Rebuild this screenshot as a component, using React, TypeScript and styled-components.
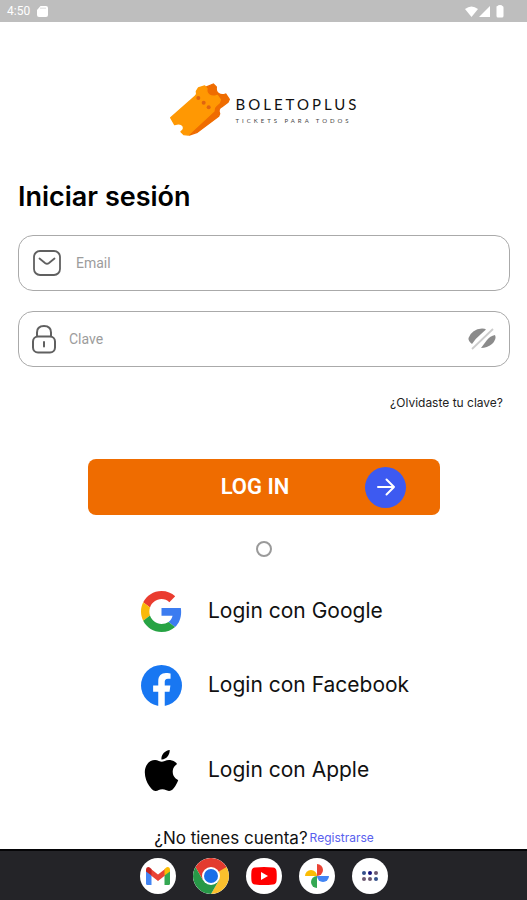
import React from "react";
import styled, { createGlobalStyle } from "styled-components";

const GlobalStyle = createGlobalStyle`
  * { box-sizing: border-box; }
  body { margin: 0; background: #fff; color: #111; font-family: Inter, "Open Sans", sans-serif; }
  button, input { font: inherit; }
  svg { display: block; flex: none; }
`;

const Screen = styled.div`
  min-height: 100vh;
  display: flex;
  flex-direction: column;
`;

const StatusBar = styled.header`
  display: flex;
  align-items: center;
  justify-content: space-between;
  height: 22px;
  padding: 0 23px 0 7px;
  background: #bebebe;
  color: #fff;
  font: 12px/22px Roboto, sans-serif;
`;

const StatusGroup = styled.div<{ $gap: number }>`
  display: flex;
  align-items: center;
  gap: ${(p) => p.$gap}px;
`;

const Content = styled.main`
  flex: 1;
  display: flex;
  flex-direction: column;
  padding: 61px 17px 0 18px;
`;

const Brand = styled.div`
  display: flex;
  align-items: center;
  align-self: center;
  gap: 5px;
`;

const BrandName = styled.div`
  font: 15px/20px Lato, sans-serif;
  letter-spacing: 3px;
`;

const BrandTagline = styled.div`
  color: #444;
  font: 6px/14px Lato, sans-serif;
  letter-spacing: 3px;
`;

const Title = styled.h1`
  margin: 41px 0 20px;
  font-size: 27px;
  line-height: 36px;
  font-weight: 600;
  color: #000;
`;

const Form = styled.form`
  display: flex;
  flex-direction: column;
`;

const Field = styled.label<{ $gap: number }>`
  display: flex;
  align-items: center;
  gap: ${(p) => p.$gap}px;
  height: 56px;
  padding: 0 12px;
  margin-bottom: 20px;
  border: 1px solid #aaa;
  border-radius: 15px;
`;

const TextInput = styled.input`
  flex: 1;
  min-width: 0;
  padding: 0;
  border: 0;
  outline: 0;
  background: none;
  font: 14px/20px Roboto, sans-serif;
  &::placeholder { color: #9c9c9c; opacity: 1; }
`;

const IconButton = styled.button`
  padding: 0;
  border: 0;
  background: none;
  cursor: pointer;
`;

const ForgotLink = styled.a`
  align-self: flex-end;
  margin: 8px 7px 0 0;
  color: #222;
  font-size: 12px;
  line-height: 16px;
  text-decoration: none;
`;

const SubmitButton = styled.button`
  display: grid;
  grid-template-columns: 1fr auto 1fr;
  align-items: center;
  width: 352px;
  max-width: 100%;
  height: 56px;
  margin: 48px auto 0;
  padding: 0 34px 0 16px;
  border: 0;
  border-radius: 8px;
  background: #ef6c00;
  color: #fff;
  font: 500 22px/28px Roboto, sans-serif;
  cursor: pointer;
`;

const SubmitLabel = styled.span`
  grid-column: 2;
  font-weight: 600;
`;

const ArrowBadge = styled.span`
  display: grid;
  place-items: center;
  justify-self: end;
  width: 41px;
  height: 41px;
  border-radius: 50%;
  background: #3d5af1;
`;

const RoundOption = styled.input`
  appearance: none;
  align-self: center;
  width: 16px;
  height: 16px;
  margin: 26px 0 0;
  border: 2px solid #9a9a9a;
  border-radius: 50%;
  &:checked { background: #9a9a9a; }
`;

const Providers = styled.div`
  display: flex;
  flex-direction: column;
  align-self: center;
  width: 246px;
  margin-top: 33px;
`;

const ProviderButton = styled.button<{ $space?: number }>`
  display: flex;
  align-items: center;
  gap: 26px;
  height: 42px;
  margin-top: ${(p) => p.$space ?? 0}px;
  padding: 0;
  border: 0;
  background: none;
  color: #111;
  font-size: 21px;
  line-height: 28px;
  white-space: nowrap;
  cursor: pointer;
`;

const SignUp = styled.p`
  display: flex;
  align-items: center;
  align-self: center;
  gap: 2px;
  margin: 36px 0 0;
  font-size: 17px;
  line-height: 22px;
  white-space: nowrap;
`;

const SignUpLink = styled.a`
  color: #5960ee;
  font-size: 12px;
  text-decoration: none;
`;

const Dock = styled.nav`
  display: flex;
  align-items: center;
  justify-content: center;
  gap: 17px;
  height: 52px;
  border-top: 2px solid #050507;
  background: #242428;
`;

const DockButton = styled.button`
  display: grid;
  place-items: center;
  width: 36px;
  height: 36px;
  padding: 0;
  overflow: hidden;
  border: 0;
  border-radius: 50%;
  background: #fff;
  cursor: pointer;
`;

const TicketLogo = () => (
  <svg width="62" height="55" viewBox="15 10 186 165" strokeLinejoin="round" aria-hidden="true">
    <path fill="#ef6c00" stroke="#ef6c00" strokeWidth="4" d="M122 24L148 13L157 22Q155 36 164 42Q173 48 185 43L196 59L192 68L173 82Q161 88 167 102L164 110L100 158L76 166L70 130Z" />
    <path fill="#ff9803" stroke="#ff9803" strokeWidth="4" d="M20 114L94 49Q100 44 97 35L103 25L122 19L129 27Q126 40 136 46Q145 53 160 47L169 60L166 69L156 78Q148 84 150 94L86 153L73 166L60 165L51 156Q62 150 57 139Q50 128 32 135Z" />
    <g fill="#df6510">
      <circle cx="103" cy="55" r="6" />
      <circle cx="119" cy="69" r="6" />
      <circle cx="134" cy="83" r="6" />
    </g>
  </svg>
);

const CardIcon = () => (
  <svg width="11" height="11" viewBox="0 0 11 11" aria-hidden="true">
    <path fill="#fff" d="M3.5 0H9Q11 0 11 2V9Q11 11 9 11H2Q0 11 0 9V4Z" />
    <path stroke="#bebebe" strokeWidth=".8" d="M4 1.5V3M6 1.5V3M8 1.5V3" />
  </svg>
);

const SignalIcons = () => (
  <svg width="39" height="13" viewBox="0 0 39 13" fill="#fff" aria-hidden="true">
    <path d="M0 4Q6.500-1 13 4L6.500 12Z" />
    <path d="M14 12L25 1V12Z" />
    <path d="M31.500 1.500Q31.500 1 32.500 1Q33 0 35 0Q37 0 37.500 1Q38.500 1 38.500 2.500V11Q38.500 12.500 37 12.500H33Q31.500 12.500 31.500 11Z" />
  </svg>
);

const MailIcon = () => (
  <svg width="32" height="28" viewBox="0 0 32 28" fill="none" stroke="#606060" aria-hidden="true">
    <rect x="3" y="2" width="26" height="24" rx="6" strokeWidth="1.8" />
    <path d="M8.500 9.500L14 14Q16 15.500 18 14L23.500 9.500" strokeWidth="1.8" strokeLinecap="round" />
  </svg>
);

const LockIcon = () => (
  <svg width="26" height="30" viewBox="0 0 26 30" fill="none" stroke="#606060" aria-hidden="true">
    <path d="M6 13V8.500Q6 2 13 2Q20 2 20 8.500V13" strokeWidth="2" />
    <rect x="2" y="12.500" width="22" height="16" rx="5" strokeWidth="2" />
    <path d="M13 18V22.500" strokeWidth="2" strokeLinecap="round" />
  </svg>
);

const HiddenEyeIcon = () => (
  <svg width="30" height="26" viewBox="0 0 30 26" aria-hidden="true">
    <path fill="#8b8b8b" d="M5 18Q1 15 1.500 12Q5 3 15 2.500Q18 2.500 19 3.500L14 8Q9 12 5 18Z" />
    <path fill="#8b8b8b" d="M14 22Q17 18 20 14Q23 10 28 9Q30 13 25 18Q20 22 14 22Z" />
    <path d="M5 23L26 3" stroke="#ccc" strokeWidth="1.800" />
  </svg>
);

const ArrowIcon = () => (
  <svg width="20" height="20" viewBox="0 0 20 20" fill="none" stroke="#fff" strokeWidth="2" strokeLinecap="round" strokeLinejoin="round" aria-hidden="true">
    <path d="M2 10H18M10.500 2.500L18 10L10.500 17.500" />
  </svg>
);

const GoogleIcon = () => (
  <svg width="41" height="41" viewBox="0 0 48 48" aria-hidden="true">
    <path fill="#ea3c2f" d="M24 9.500c3.540 0 6.710 1.220 9.210 3.600l6.850-6.850C35.900 2.380 30.470 0 24 0 14.620 0 6.510 5.380 2.560 13.220l7.980 6.190C12.430 13.720 17.740 9.500 24 9.500z" />
    <path fill="#3c7cf0" d="M47 24.550c0-1.570-.150-3.090-.380-4.550H24v9.020h12.940c-.580 2.960-2.260 5.480-4.780 7.180l7.730 6c4.510-4.180 7.110-10.360 7.110-17.650z" />
    <path fill="#f9b90a" d="M10.530 28.590c-.480-1.450-.760-2.990-.760-4.590s.270-3.140.760-4.590l-7.980-6.190C.920 16.460 0 20.120 0 24c0 3.880.920 7.540 2.560 10.780l7.970-6.190z" />
    <path fill="#27a344" d="M24 48c6.480 0 11.930-2.130 15.890-5.810l-7.730-6c-2.150 1.450-4.920 2.300-8.160 2.300-6.260 0-11.570-4.220-13.470-9.910l-7.980 6.190C6.510 42.620 14.620 48 24 48z" />
  </svg>
);

const FacebookIcon = () => (
  <svg width="41" height="41" viewBox="0 0 24 24" aria-hidden="true">
    <circle cx="12" cy="12" r="12" fill="#1877f2" />
    <path fill="#fff" d="M10.100 24V15.600H7.100V12H10.100V9.400C10.100 6.400 11.900 4.700 14.600 4.700C15.900 4.700 17.300 5 17.300 5V8H15.800C14.300 8 13.900 8.900 13.900 9.800V12H17.200L16.700 15.600H13.900V24Z" />
  </svg>
);

const AppleIcon = () => (
  <svg width="41" height="41" viewBox="0 0 24 24" aria-hidden="true">
    <path fill="#000" d="M12.152 6.896c-.948 0-2.415-1.078-3.960-1.040-2.040.027-3.910 1.183-4.961 3.014-2.117 3.675-.546 9.103 1.519 12.090 1.013 1.454 2.208 3.090 3.792 3.039 1.520-.065 2.090-.987 3.935-.987 1.831 0 2.350.987 3.960.948 1.637-.026 2.676-1.480 3.676-2.948 1.156-1.688 1.636-3.325 1.662-3.415-.039-.013-3.182-1.221-3.220-4.857-.026-3.040 2.480-4.494 2.597-4.559-1.429-2.090-3.623-2.324-4.390-2.376-2-.156-3.675 1.090-4.610 1.090zM15.530 3.830c.843-1.012 1.400-2.427 1.245-3.830-1.207.052-2.662.805-3.532 1.818-.780.896-1.454 2.338-1.273 3.714 1.338.104 2.715-.688 3.559-1.701" />
  </svg>
);

const GmailIcon = () => (
  <svg width="24" height="18" viewBox="0 0 24 18" aria-hidden="true">
    <path fill="#4285f4" d="M0 3L5.500 7V18H1.500Q0 18 0 16.500Z" />
    <path fill="#34a853" d="M24 3L18.500 7V18H22.500Q24 18 24 16.500Z" />
    <path fill="#ea4335" d="M5 2L12 7.500L19 2V8.500L12 14L5 8.500Z" />
    <path fill="#c5221f" d="M0 3Q0 0 2.500 0Q3.500 0 5.500 2V8.500L0 4.500Z" />
    <path fill="#fbbc04" d="M24 3Q24 0 21.500 0Q20.500 0 18.500 2V8.500L24 4.500Z" />
  </svg>
);

const ChromeIcon = () => (
  <svg width="36" height="36" viewBox="0 0 36 36" aria-hidden="true">
    <path fill="#fbc02d" d="M18 18V9H33.600A18 18 0 0 1 18 36L25.800 22.500Z" />
    <path fill="#e33b2e" d="M18 18L10.200 22.500L2.400 9A18 18 0 0 1 33.600 9Z" />
    <path fill="#279847" d="M18 18L25.800 22.500L18 36A18 18 0 0 1 2.400 9L10.200 22.500Z" />
    <circle cx="18" cy="18" r="9" fill="#fff" />
    <circle cx="18" cy="18" r="7" fill="#1a6fe8" />
  </svg>
);

const YouTubeIcon = () => (
  <svg width="26" height="18" viewBox="0 0 26 18" aria-hidden="true">
    <path fill="#f00" d="M4 .5Q13-.5 22 .5Q25 .8 25.500 4Q26 9 25.500 14Q25 17.200 22 17.500Q13 18.500 4 17.500Q1 17.200 .5 14Q0 9 .5 4Q1 .8 4 .5Z" />
    <path fill="#fff" d="M10 5L17 9L10 13Z" />
  </svg>
);

const PhotosIcon = () => (
  <svg width="26" height="26" viewBox="0 0 26 26" aria-hidden="true">
    <path fill="#ea4335" d="M13 1A6 6 0 0 1 13 13Z" />
    <path fill="#4285f4" d="M25 13A6 6 0 0 1 13 13Z" />
    <path fill="#34a853" d="M13 25A6 6 0 0 1 13 13Z" />
    <path fill="#fbbc04" d="M1 13A6 6 0 0 1 13 13Z" />
  </svg>
);

const AppsIcon = () => (
  <svg width="18" height="12" viewBox="0 0 18 12" aria-hidden="true">
    <g fill="#34518b"><circle cx="3" cy="3" r="2" /><circle cx="15" cy="9" r="2" /></g>
    <g fill="#15127c"><circle cx="9" cy="3" r="2" /></g>
    <g fill="#6c5870"><circle cx="15" cy="3" r="2" /><circle cx="3" cy="9" r="2" /><circle cx="9" cy="9" r="2" /></g>
  </svg>
);

const dockApps = [
  { name: "Gmail", Icon: GmailIcon },
  { name: "Chrome", Icon: ChromeIcon },
  { name: "YouTube", Icon: YouTubeIcon },
  { name: "Fotos", Icon: PhotosIcon },
  { name: "Aplicaciones", Icon: AppsIcon },
];

export default function App() {
  return (
    <Screen>
      <GlobalStyle />
      <StatusBar>
        <StatusGroup $gap={7}><span>4:50</span><CardIcon /></StatusGroup>
        <SignalIcons />
      </StatusBar>
      <Content>
        <Brand>
          <TicketLogo />
          <div>
            <BrandName>BOLETOPLUS</BrandName>
            <BrandTagline>TICKETS PARA TODOS</BrandTagline>
          </div>
        </Brand>
        <Title>Iniciar sesión</Title>
        <Form onSubmit={(e) => e.preventDefault()}>
          <Field $gap={13}>
            <MailIcon />
            <TextInput type="email" placeholder="Email" aria-label="Email" />
          </Field>
          <Field $gap={12}>
            <LockIcon />
            <TextInput type="password" placeholder="Clave" aria-label="Clave" />
            <IconButton type="button" aria-label="Mostrar clave"><HiddenEyeIcon /></IconButton>
          </Field>
          <ForgotLink href="#clave">¿Olvidaste tu clave?</ForgotLink>
          <SubmitButton type="submit">
            <SubmitLabel>LOG IN</SubmitLabel>
            <ArrowBadge><ArrowIcon /></ArrowBadge>
          </SubmitButton>
          <RoundOption type="radio" aria-label="Recordarme" />
        </Form>
        <Providers>
          <ProviderButton type="button"><GoogleIcon />Login con Google</ProviderButton>
          <ProviderButton type="button" $space={32}><FacebookIcon />Login con Facebook</ProviderButton>
          <ProviderButton type="button" $space={43}><AppleIcon />Login con Apple</ProviderButton>
        </Providers>
        <SignUp>¿No tienes cuenta?<SignUpLink href="#registro">Registrarse</SignUpLink></SignUp>
      </Content>
      <Dock aria-label="Aplicaciones">
        {dockApps.map(({ name, Icon }) => (
          <DockButton key={name} type="button" aria-label={name}><Icon /></DockButton>
        ))}
      </Dock>
    </Screen>
  );
}
